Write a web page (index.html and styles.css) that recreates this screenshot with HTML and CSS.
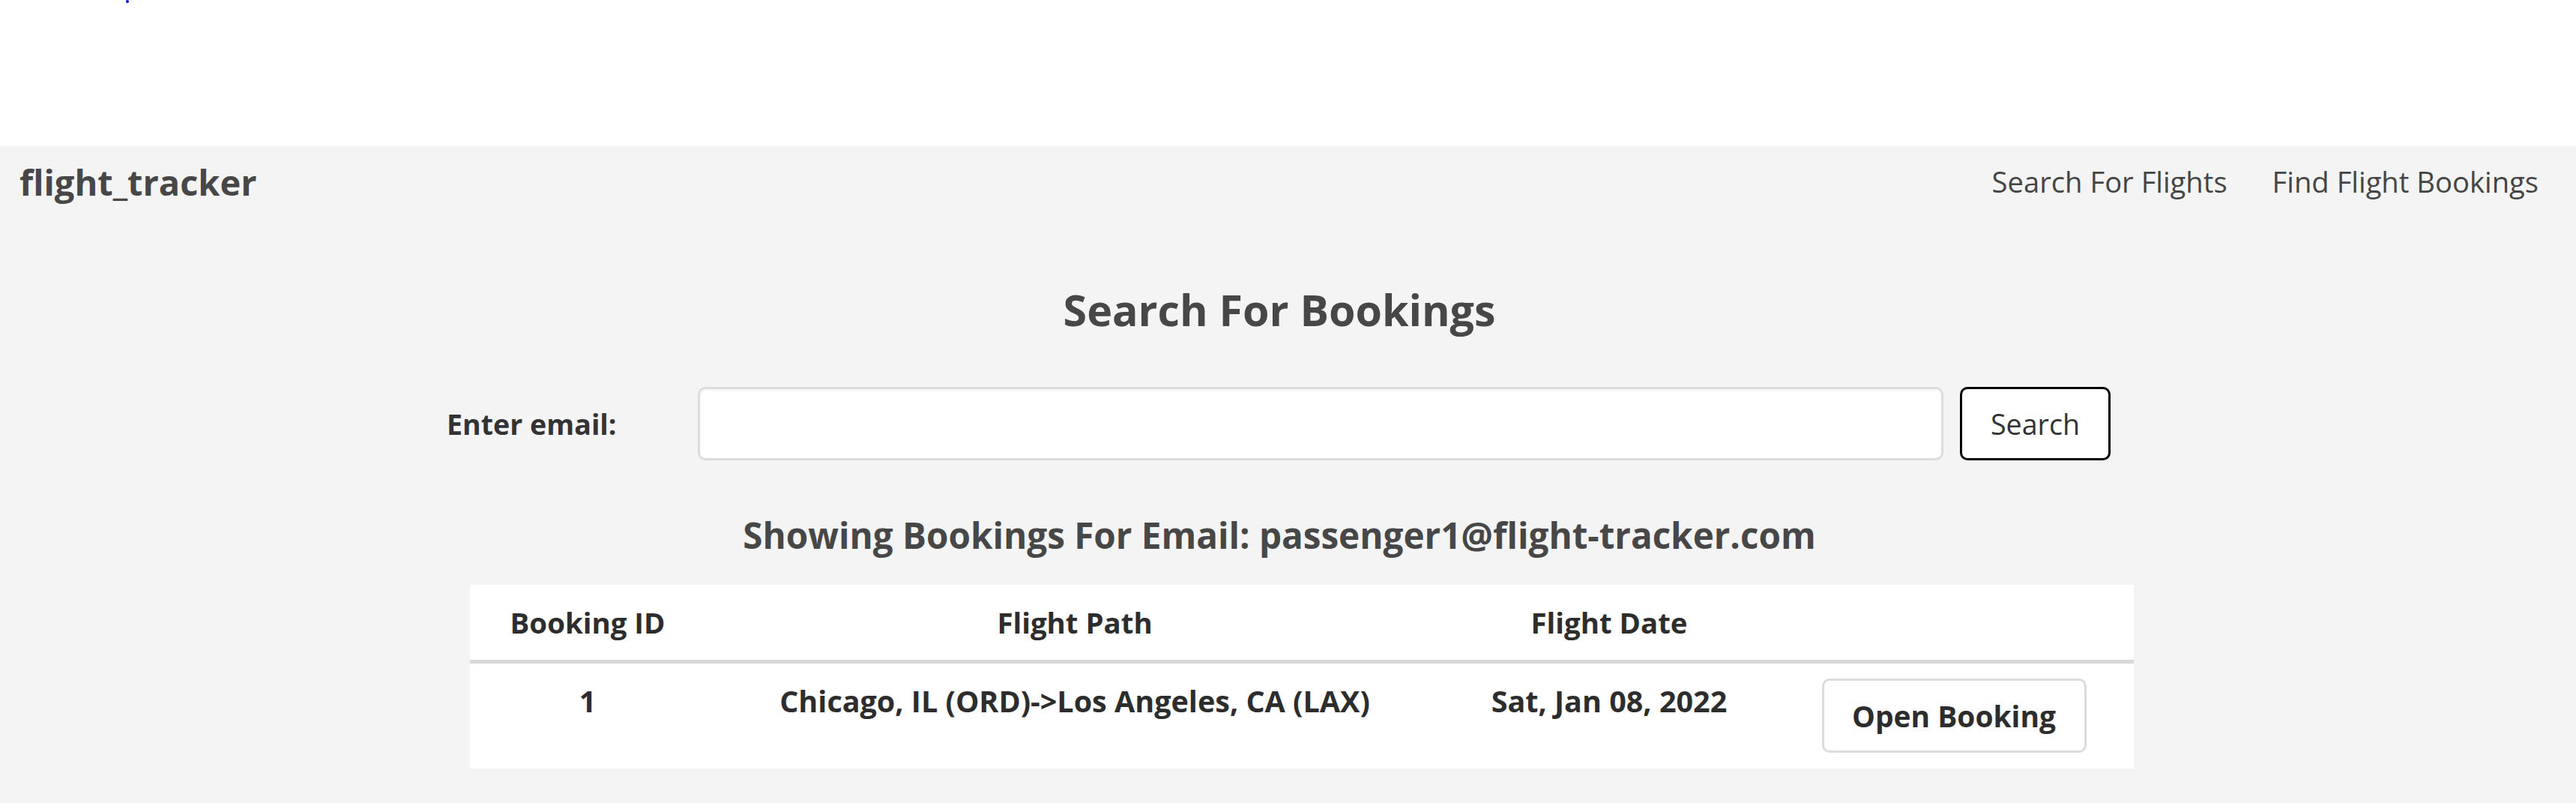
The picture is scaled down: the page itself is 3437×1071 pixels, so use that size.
FILE: index.html
```html
<!DOCTYPE html>
<html lang="en">
<head>
<meta charset="utf-8">
<title>flight_tracker</title>
<link rel="stylesheet" href="styles.css">
</head>
<body>
<div class="topbar"><a class="dot" href="#"></a></div>
<div class="shell">
  <nav class="navbar">
    <a class="brand" href="#">flight_tracker</a>
    <div class="nav-links">
      <a class="nav-link" href="#">Search For Flights</a>
      <a class="nav-link" href="#">Find Flight Bookings</a>
    </div>
  </nav>
  <main class="content">
    <h1 class="title">Search For Bookings</h1>
    <form class="search-row">
      <label class="search-label" for="email">Enter email:</label>
      <input class="search-input" id="email" type="text">
      <button class="search-btn" type="button">Search</button>
    </form>
    <h2 class="showing">Showing Bookings For Email: passenger1@flight-tracker.com</h2>
    <table class="bookings">
      <colgroup>
        <col class="c-id"><col class="c-path"><col class="c-date"><col class="c-act">
      </colgroup>
      <thead>
        <tr><th>Booking ID</th><th>Flight Path</th><th>Flight Date</th><th></th></tr>
      </thead>
      <tbody>
        <tr>
          <td>1</td>
          <td>Chicago, IL (ORD)-&gt;Los Angeles, CA (LAX)</td>
          <td>Sat, Jan 08, 2022</td>
          <td><button class="open-btn" type="button">Open Booking</button></td>
        </tr>
      </tbody>
    </table>
  </main>
</div>
</body>
</html>
```
FILE: styles.css
```css
html, body {
  margin: 0;
  padding: 0;
}
body {
  background: #ffffff;
  font-family: "Open Sans", "Noto Sans", sans-serif;
  color: #333333;
}
.topbar {
  height: 195px;
  background: #ffffff;
}
.dot {
  display: block;
  width: 4px;
  height: 4px;
  margin-left: 168px;
  border-radius: 2px;
  background: #0000ff;
}
.shell {
  background: #f4f4f4;
  min-height: 876px;
}
.navbar {
  width: 3414px;
  box-sizing: border-box;
  height: 100px;
  padding: 11px 27px 0 26px;
  display: flex;
  justify-content: space-between;
  align-items: flex-start;
}
.brand {
  font-size: 47px;
  line-height: 75px;
  font-weight: 700;
  color: #474747;
  text-decoration: none;
}
.nav-links {
  display: flex;
  gap: 60px;
}
.nav-link {
  font-size: 38.2px;
  line-height: 60px;
  margin-top: 6px;
  color: #454545;
  text-decoration: none;
}
.content {
  width: 3414px;
  padding-top: 85px;
  padding-bottom: 46px;
}
.title {
  margin: 0;
  text-align: center;
  font-size: 57.3px;
  line-height: 67px;
  font-weight: 700;
  color: #474747;
}
.search-row {
  display: flex;
  align-items: center;
  margin: 69px 0 0 596px;
  height: 98px;
}
.search-label {
  width: 335px;
  font-size: 37.6px;
  font-weight: 700;
  color: #333333;
}
.search-input {
  box-sizing: border-box;
  width: 1662px;
  height: 98px;
  margin: 0;
  border: 3px solid #dcdcdc;
  border-radius: 10px;
  background: #ffffff;
  box-shadow: inset 0 3px 4px rgba(0, 0, 0, 0.035);
  font-family: inherit;
  font-size: 37.6px;
}
.search-btn {
  box-sizing: border-box;
  width: 201px;
  height: 98px;
  margin: 0 0 0 22px;
  border: 3px solid #000000;
  border-radius: 10px;
  background: #ffffff;
  font-family: inherit;
  font-size: 37.6px;
  color: #333333;
  padding: 0;
}
.showing {
  margin: 72px 0 0 0;
  text-align: center;
  font-size: 47.6px;
  line-height: 56px;
  font-weight: 700;
  color: #474747;
}
.bookings {
  margin: 38px 0 0 627px;
  width: 2220px;
  border-collapse: collapse;
  table-layout: fixed;
  background: #ffffff;
  color: #2d2d2d;
}
.c-id { width: 314px; }
.c-path { width: 986px; }
.c-date { width: 440px; }
.c-act { width: 480px; }
.bookings th,
.bookings td {
  padding: 20px;
  line-height: 60px;
  font-weight: 700;
  text-align: center;
  vertical-align: top;
}
.bookings th {
  font-size: 38.4px;
}
.bookings td {
  font-size: 39.5px;
}
.bookings thead th {
  border-bottom: 5px solid #d9d9d9;
}
.bookings tbody td {
  padding-bottom: 21px;
}
.open-btn {
  box-sizing: border-box;
  width: 353px;
  height: 99px;
  padding: 0;
  border: 3px solid #dcdcdc;
  border-radius: 10px;
  background: #ffffff;
  font-family: inherit;
  font-size: 38.9px;
  line-height: 60px;
  font-weight: 700;
  color: #2d2d2d;
}
```
